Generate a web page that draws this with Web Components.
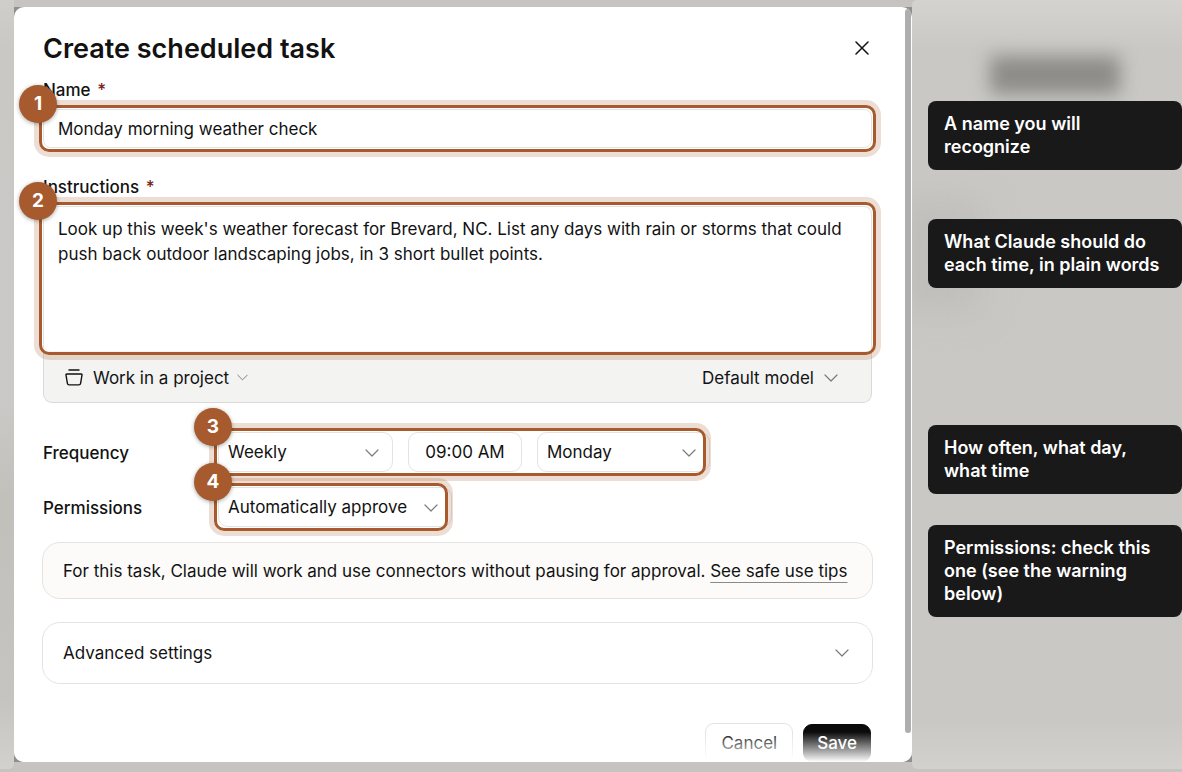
<!DOCTYPE html>
<html lang="en">
<head>
<meta charset="utf-8">
<meta name="viewport" content="width=device-width, initial-scale=1">
<title>Create scheduled task</title>
<style>
  html, body { margin: 0; height: 100%; }
  body {
    font-family: Inter, "Liberation Sans", sans-serif;
    font-size: 17px;
    line-height: 24px;
    color: #121212;
    background: #c5c4c1;
    --accent: #a65a2d;
    --halo: rgba(166, 90, 45, .2);
    --line: #e3e3e2;
    --ink: #121212;
  }
</style>
</head>
<body>
<task-page></task-page>

<template id="t-page">
  <style>
    :host { display: grid; grid-template-columns: 14px minmax(0, 1fr) 270px; height: 100vh; min-height: 600px; overflow: hidden; }
    .rail { margin-bottom: 3px; border-radius: 0 0 5px 0; background: linear-gradient(#cfcecb 0, #c9c8c5 50px, #cac9c7 400px, #c1c0bb 500px, #c5c4c1 700px, #d2d1ce 100%); }
    main { box-sizing: border-box; padding: 7px 0 10px; min-height: 0; }
    aside {
      position: relative; z-index: 0; overflow: hidden; box-sizing: border-box;
      margin-bottom: 3px; padding: 101px 0 0 16px; border-radius: 5px 0 0 5px;
      background: linear-gradient(#d4d3d0 0, #c9c8c5 50px, #c9c8c5 670px, #c9c8c5 720px, #d2d1cd 100%);
    }
    aside::before, aside::after { content: ""; position: absolute; z-index: -1; }
    aside::before { left: 78px; top: 56px; width: 130px; height: 38px; background: #8d8c89; filter: blur(9px); }
    aside::after { left: -20px; top: 200px; width: 90px; height: 110px; background: #bfbebb; filter: blur(18px); }
    .after-first { margin-top: 49px; }
    .after-second { margin-top: 137px; }
    .after-third { margin-top: 31px; }
  </style>
  <div class="rail"></div>
  <main><task-dialog></task-dialog></main>
  <aside>
    <callout-note>A name you will recognize</callout-note>
    <callout-note class="after-first">What Claude should do each time, in plain words</callout-note>
    <callout-note class="after-second">How often, what day, what time</callout-note>
    <callout-note class="after-third">Permissions: check this one (see the warning below)</callout-note>
  </aside>
</template>

<template id="t-callout">
  <style>
    :host { display: block; box-sizing: border-box; padding: 11px 12px 12px 16px; border-radius: 8px; background: #191919; color: #fff; font-size: 18px; line-height: 23px; font-weight: 600; }
  </style>
  <slot></slot>
</template>

<template id="t-ring">
  <style>
    :host { display: block; position: relative; }
    .ring { position: absolute; z-index: 1; inset: -4px var(--ring-right, -4px) -4px -4px; box-sizing: border-box; border: 3px solid var(--accent); border-radius: 10px; box-shadow: 0 0 0 5px var(--halo); pointer-events: none; }
    .badge { position: absolute; z-index: 2; left: -24px; top: -24px; width: 38px; height: 38px; border-radius: 50%; background: var(--accent); color: #fff; font-size: 19px; line-height: 38px; font-weight: 700; text-align: center; box-shadow: 0 1px 4px rgba(0, 0, 0, .35); }
  </style>
  <slot></slot>
  <div class="ring"></div>
  <div class="badge"></div>
</template>

<template id="t-chevron">
  <style>
    :host { display: inline-flex; width: 14px; height: 8px; color: #7b7a76; pointer-events: none; }
    :host([small]) { width: 11px; height: 7px; }
    svg { width: 100%; height: 100%; }
  </style>
  <svg viewBox="0 0 14 8" fill="none" stroke="currentColor" stroke-width="1.2" stroke-linecap="round" stroke-linejoin="round" aria-hidden="true"><path d="M1 1l6 6 6-6"/></svg>
</template>

<template id="t-select">
  <style>
    :host { display: block; position: relative; height: 40px; }
    select { appearance: none; box-sizing: border-box; width: 100%; height: 100%; margin: 0; padding: 0 32px 0 9px; border: 1px solid var(--line); border-radius: 10px; background: #fff; font: inherit; color: inherit; }
    chevron-icon { position: absolute; right: 14px; top: 17px; }
  </style>
  <select><option></option></select>
  <chevron-icon></chevron-icon>
</template>

<template id="t-name">
  <style>
    :host { display: block; }
    label { display: block; margin-bottom: 7px; font-weight: 500; }
    label span { color: #7a2320; margin-left: 2px; }
    input { display: block; box-sizing: border-box; width: 100%; height: 39px; margin: 0; padding: 0 14px; border: 1px solid var(--line); border-radius: 8px; background: #fff; font: inherit; color: inherit; }
  </style>
  <label for="name">Name <span>*</span></label>
  <step-ring step="1"><input id="name" type="text" value="Monday morning weather check" required></step-ring>
</template>

<template id="t-instructions">
  <style>
    :host { display: block; }
    label { display: block; margin-bottom: 7px; font-weight: 500; }
    label span { color: #7a2320; margin-left: 2px; }
    textarea { display: block; box-sizing: border-box; width: 100%; height: 145px; margin: 0; padding: 10px 10px 10px 14px; border: 1px solid var(--line); border-bottom: 0; border-radius: 8px 8px 0 0; background: #fff; font: inherit; line-height: 25px; color: inherit; resize: none; overflow: hidden; }
    .bar { display: flex; justify-content: space-between; align-items: center; box-sizing: border-box; height: 52px; padding: 2px 33px 0 21px; border: 1px solid #dadad9; border-top: 0; border-radius: 0 0 9px 9px; background: #f3f3f2; }
    button { display: flex; align-items: center; margin: 0; padding: 0; border: 0; background: none; font: inherit; color: inherit; }
    .project { gap: 8px; }
    .model { gap: 10px; }
    svg { width: 20px; height: 18px; }
  </style>
  <label for="instructions">Instructions <span>*</span></label>
  <step-ring step="2"><textarea id="instructions" required>Look up this week's weather forecast for Brevard, NC. List any days with rain or storms that could push back outdoor landscaping jobs, in 3 short bullet points.</textarea></step-ring>
  <div class="bar">
    <button class="project" type="button">
      <svg viewBox="0 0 20 18" fill="none" stroke="currentColor" stroke-width="1.4" stroke-linecap="round" stroke-linejoin="round" aria-hidden="true"><path d="M4 1h10M1.800 5h14.400a.8.8 0 0 1 .8 1l-1.400 8.400a1.800 1.800 0 0 1-1.800 1.500H4.200a1.800 1.800 0 0 1-1.800-1.500L1 6a.8.8 0 0 1 .8-1z"/></svg>
      Work in a project
      <chevron-icon small></chevron-icon>
    </button>
    <button class="model" type="button">Default model <chevron-icon></chevron-icon></button>
  </div>
</template>

<template id="t-schedule">
  <style>
    :host { display: grid; grid-template-columns: 175px minmax(0, 1fr); row-gap: 15px; align-items: center; }
    .label { padding-top: 2px; font-weight: 500; }
    step-ring { justify-self: start; --ring-right: 4px; }
    .controls { display: grid; grid-template-columns: 175px 114px 173px; gap: 15px; }
    input { box-sizing: border-box; width: 100%; height: 40px; margin: 0; padding: 0; border: 1px solid var(--line); border-radius: 10px; background: #fff; font: inherit; color: inherit; text-align: center; }
    .permission { width: 234px; }
  </style>
  <div class="label" id="frequency">Frequency</div>
  <step-ring step="3">
    <div class="controls" role="group" aria-labelledby="frequency">
      <select-box label="Frequency" value="Weekly"></select-box>
      <input type="text" aria-label="Time" value="09:00 AM">
      <select-box label="Day" value="Monday"></select-box>
    </div>
  </step-ring>
  <div class="label">Permissions</div>
  <step-ring step="4"><select-box class="permission" label="Permissions" value="Automatically approve"></select-box></step-ring>
</template>

<template id="t-card">
  <style>
    :host { display: flex; align-items: center; justify-content: space-between; box-sizing: border-box; margin-inline: -1px; padding: 0 20px; border: 1px solid var(--line); border-radius: 18px; background: #fff; }
    :host([tone="info"]) { background: #fcfbf9; }
  </style>
  <slot></slot>
</template>

<template id="t-button">
  <style>
    :host { display: block; }
    button { display: block; box-sizing: border-box; height: 40px; margin: 0; padding: 0 15px; border: 1px solid var(--line); border-radius: 9px; background: #fff; font: inherit; color: inherit; }
    :host([primary]) button { height: 38px; padding: 0 13px; border-color: #0b0b0b; background: #0b0b0b; color: #fff; font-weight: 500; }
  </style>
  <button type="button"><slot></slot></button>
</template>

<template id="t-dialog">
  <style>
    :host { display: block; position: relative; height: 100%; background: #8f8f8d; }
    .sheet { position: relative; box-sizing: border-box; height: 100%; overflow: hidden; padding: 24px 40px 0 29px; border-radius: 10px; background: #fff; }
    header { display: flex; justify-content: space-between; align-items: center; margin-bottom: 11px; }
    h1 { margin: 0; font-size: 27px; line-height: 36px; font-weight: 600; }
    .close { display: flex; margin: 0; padding: 2px; border: 0; background: none; color: inherit; }
    .close svg { width: 16px; height: 16px; }
    instructions-field { margin-top: 27px; }
    schedule-fields { margin-top: 29px; }
    .notice { height: 57px; margin-top: 15px; }
    .notice a { color: inherit; text-decoration: underline; text-decoration-color: #8a8a87; text-decoration-thickness: 1px; text-underline-offset: 5px; }
    .advanced { height: 62px; margin-top: 23px; }
    .advanced button { display: flex; flex: 1; justify-content: space-between; align-items: center; margin: 0; padding: 0 3px 0 0; border: 0; background: none; font: inherit; color: inherit; }
    footer { display: flex; justify-content: flex-end; align-items: center; gap: 10px; margin-top: 39px; padding-right: 1px; }
    .fade { position: absolute; left: 0; right: 0; bottom: 0; height: 30px; background: linear-gradient(rgba(255,255,255,0), #fff); pointer-events: none; }
    .thumb { position: absolute; right: 1px; top: 2px; bottom: 29px; width: 6px; border-radius: 3px; background: #aeaeae; }
  </style>
  <div class="sheet" role="dialog" aria-labelledby="title">
    <header>
      <h1 id="title">Create scheduled task</h1>
      <button class="close" type="button" aria-label="Close"><svg viewBox="0 0 16 16" fill="none" stroke="currentColor" stroke-width="1.5" stroke-linecap="round" aria-hidden="true"><path d="M2 1l12 12M14 1L2 13"/></svg></button>
    </header>
    <name-field></name-field>
    <instructions-field></instructions-field>
    <schedule-fields></schedule-fields>
    <outline-card class="notice" tone="info"><span>For this task, Claude will work and use connectors without pausing for approval. <a href="#tips">See safe use tips</a></span></outline-card>
    <outline-card class="advanced"><button type="button" aria-expanded="false">Advanced settings <chevron-icon></chevron-icon></button></outline-card>
    <footer><action-button>Cancel</action-button><action-button primary>Save</action-button></footer>
    <div class="fade"></div>
    <div class="thumb"></div>
  </div>
</template>

<script>
  class TemplateElement extends HTMLElement {
    constructor() {
      super();
      this.attachShadow({ mode: 'open' });
      this.shadowRoot.append(document.getElementById(this.constructor.template).content.cloneNode(true));
    }
  }
  const define = (tag, template, Base = TemplateElement) =>
    customElements.define(tag, class extends Base { static template = template; });

  class StepRing extends TemplateElement {
    connectedCallback() {
      this.shadowRoot.querySelector('.badge').textContent = this.getAttribute('step');
    }
  }
  class SelectBox extends TemplateElement {
    connectedCallback() {
      this.shadowRoot.querySelector('option').textContent = this.getAttribute('value');
      this.shadowRoot.querySelector('select').setAttribute('aria-label', this.getAttribute('label'));
    }
  }

  define('chevron-icon', 't-chevron');
  define('step-ring', 't-ring', StepRing);
  define('select-box', 't-select', SelectBox);
  define('callout-note', 't-callout');
  define('outline-card', 't-card');
  define('action-button', 't-button');
  define('name-field', 't-name');
  define('instructions-field', 't-instructions');
  define('schedule-fields', 't-schedule');
  define('task-dialog', 't-dialog');
  define('task-page', 't-page');
</script>
</body>
</html>
